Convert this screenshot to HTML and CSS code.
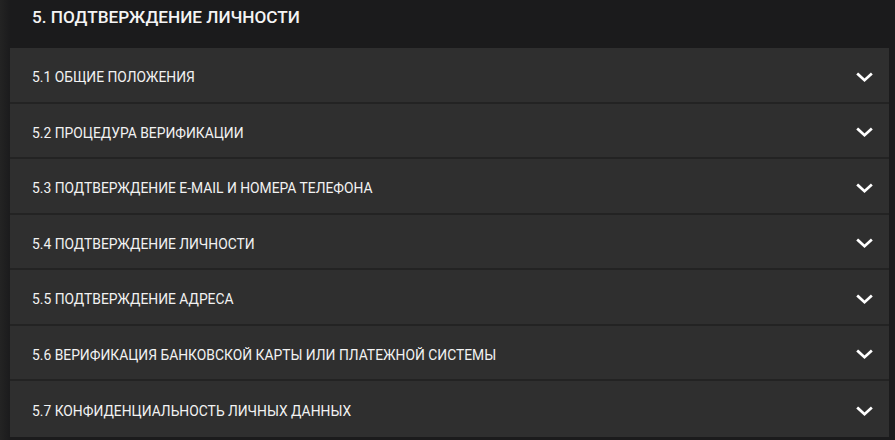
FILE: index.html
```html
<!DOCTYPE html>
<html lang="ru">
<head>
<meta charset="utf-8">
<title>Подтверждение личности</title>
<link rel="stylesheet" href="styles.css">
</head>
<body>
<div class="page">
  <h2 class="title">5. ПОДТВЕРЖДЕНИЕ ЛИЧНОСТИ</h2>
  <div class="accordion">
    <div class="item"><span class="label">5.1 ОБЩИЕ ПОЛОЖЕНИЯ</span><svg class="chev" viewBox="0 0 16 10"><path d="M2 2l6 5.5L14 2"/></svg></div>
    <div class="item"><span class="label">5.2 ПРОЦЕДУРА ВЕРИФИКАЦИИ</span><svg class="chev" viewBox="0 0 16 10"><path d="M2 2l6 5.5L14 2"/></svg></div>
    <div class="item"><span class="label">5.3 ПОДТВЕРЖДЕНИЕ E-MAIL И НОМЕРА ТЕЛЕФОНА</span><svg class="chev" viewBox="0 0 16 10"><path d="M2 2l6 5.5L14 2"/></svg></div>
    <div class="item"><span class="label">5.4 ПОДТВЕРЖДЕНИЕ ЛИЧНОСТИ</span><svg class="chev" viewBox="0 0 16 10"><path d="M2 2l6 5.5L14 2"/></svg></div>
    <div class="item"><span class="label">5.5 ПОДТВЕРЖДЕНИЕ АДРЕСА</span><svg class="chev" viewBox="0 0 16 10"><path d="M2 2l6 5.5L14 2"/></svg></div>
    <div class="item"><span class="label">5.6 ВЕРИФИКАЦИЯ БАНКОВСКОЙ КАРТЫ ИЛИ ПЛАТЕЖНОЙ СИСТЕМЫ</span><svg class="chev" viewBox="0 0 16 10"><path d="M2 2l6 5.5L14 2"/></svg></div>
    <div class="item"><span class="label">5.7 КОНФИДЕНЦИАЛЬНОСТЬ ЛИЧНЫХ ДАННЫХ</span><svg class="chev" viewBox="0 0 16 10"><path d="M2 2l6 5.5L14 2"/></svg></div>
  </div>
</div>
</body>
</html>
```
FILE: styles.css
```css
html, body {
  margin: 0;
  padding: 0;
  background: #1b1b1c;
  height: 100%;
  overflow: hidden;
}
body {
  font-family: Roboto, "Liberation Sans", Arial, sans-serif;
  color: #f2f2f2;
}
.page {
  padding: 0 6px 0 10px;
  height: 440px;
  background: linear-gradient(90deg, #232323 0px, #1b1b1c 10px);
}
.title {
  margin: 0;
  height: 48px;
  box-sizing: border-box;
  padding: 5px 0 0 22px;
  font-size: 17.2px;
  font-weight: 500;
  line-height: 24px;
  color: #f4f4f4;
}
.accordion {
  background: #2f2f2f;
}
.item {
  display: flex;
  align-items: center;
  justify-content: space-between;
  box-sizing: border-box;
  height: 55.5px;
  padding: 5px 16px 0 22px;
  border-bottom: 2px solid #232323;
}
.item:last-child {
  border-bottom: none;
}
.label {
  font-size: 13.85px;
  font-weight: 400;
  color: #f2f2f2;
}
.chev {
  width: 17px;
  height: 11px;
  fill: none;
  stroke: #ffffff;
  stroke-width: 2.5;
  stroke-linecap: square;
}
```
